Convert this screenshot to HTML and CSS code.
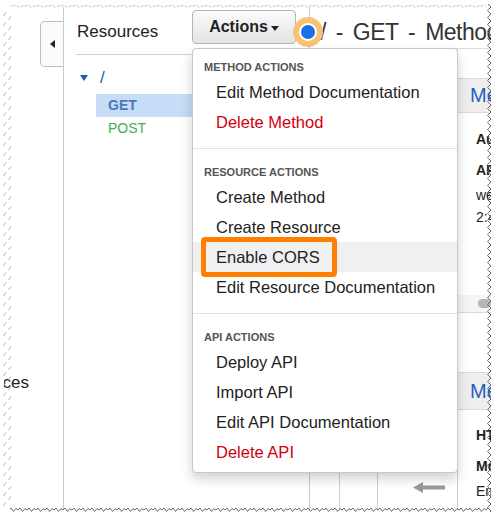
FILE: index.html
```html
<!DOCTYPE html>
<html lang="en">
<head>
<meta charset="utf-8">
<title>API Gateway - Method Execution</title>
<link rel="stylesheet" href="styles.css">
</head>
<body>
<div class="sheet">
  <aside class="rail">
    <button class="collapse" type="button"><span class="tri-left"></span></button>
    <div class="rail-label"><span>Resources</span></div>
  </aside>

  <section class="resources">
    <div class="res-head">
      <h2>Resources</h2>
      <div class="actions">
        <button class="actions-btn" type="button">Actions<span class="caret"></span></button>
        <div class="menu">
          <div class="menu-header">METHOD ACTIONS</div>
          <div class="menu-item">Edit Method Documentation</div>
          <div class="menu-item danger">Delete Method</div>
          <div class="divider"></div>
          <div class="menu-header">RESOURCE ACTIONS</div>
          <div class="menu-item">Create Method</div>
          <div class="menu-item">Create Resource</div>
          <div class="menu-item active">Enable CORS<span class="callout"></span></div>
          <div class="menu-item">Edit Resource Documentation</div>
          <div class="divider"></div>
          <div class="menu-header">API ACTIONS</div>
          <div class="menu-item">Deploy API</div>
          <div class="menu-item">Import API</div>
          <div class="menu-item">Edit API Documentation</div>
          <div class="menu-item danger">Delete API</div>
        </div>
      </div>
    </div>
    <ul class="tree">
      <li class="node"><span class="tri-down"></span><span class="path">/</span></li>
      <li class="method get">GET</li>
      <li class="method post">POST</li>
    </ul>
  </section>

  <main class="content">
    <header class="title">
      <span class="ring"><span class="dot"></span></span>
      <h1>/ - GET - Method Execution</h1>
    </header>
    <div class="body">
      <div class="diagram">
        <div class="diagram-row">
          <div class="cell c1"></div>
          <div class="cell c2"></div>
          <div class="cell c3">
            <svg class="arrow" width="32" height="11" viewBox="0 0 32 11"><path d="M0 5.5 L10 0 L10 3.5 L32 3.5 L32 7.5 L10 7.5 L10 11 Z" fill="#9a9a9a"/></svg>
          </div>
        </div>
      </div>
      <aside class="side">
        <div class="tab">Method Request</div>
        <div class="field strong">Authorization: NONE</div>
        <div class="field strong gap">API Key Required: false</div>
        <div class="field">west-</div>
        <div class="field">2:417/GET/</div>
        <div class="toggle-row"><span class="pill"></span></div>
        <div class="tab tab2">Method Response</div>
        <div class="field strong h">HTTP Status: 200</div>
        <div class="field strong gap m">Models: application/json</div>
        <div class="field">Empty</div>
      </aside>
    </div>
  </main>
</div>

<svg class="edges" width="500" height="521" viewBox="0 0 500 521" aria-hidden="true">
  <defs>
    <pattern id="pt" x="0" y="3" width="12" height="6" patternUnits="userSpaceOnUse">
      <path d="M0.5 3.5 L3.5 2 M5 2.5 L7.5 4.5 M9 3.5 L11.5 2.5" stroke="#b8b8b8" stroke-width="0.9" fill="none"/>
    </pattern>
    <pattern id="pl" x="2" y="0" width="12" height="10" patternUnits="userSpaceOnUse">
      <path d="M1.5 6 L4 2.5 M6.5 10 L9 6.5" stroke="#a8a8a8" stroke-width="0.9" fill="none"/>
    </pattern>
    <pattern id="pr" x="485" y="0" width="11" height="7" patternUnits="userSpaceOnUse">
      <path d="M6 0 L2.5 3.5 L6 7" stroke="#6a6a6a" stroke-width="1" fill="none"/>
    </pattern>
    <pattern id="pb" x="0" y="505" width="9" height="9" patternUnits="userSpaceOnUse">
      <path d="M0 5 L2 3 L4.5 6.5 L7 3.5 L9 5" stroke="#6a6a6a" stroke-width="1" fill="none"/>
    </pattern>
  </defs>
  <rect x="10" y="3" width="476" height="6" fill="url(#pt)"/>
  <rect x="2" y="10" width="12" height="496" fill="url(#pl)"/>
  <rect x="485" y="4" width="11" height="508" fill="url(#pr)"/>
  <rect x="10" y="505" width="478" height="9" fill="url(#pb)"/>
</svg>
</body>
</html>
```

FILE: styles.css
```css
* { box-sizing: border-box; }

html, body {
  margin: 0;
  padding: 0;
  background: #fff;
}

body {
  position: relative;
  width: 500px;
  height: 521px;
  overflow: hidden;
  font-family: "Liberation Sans", Arial, sans-serif;
  color: #222;
}

.sheet {
  display: flex;
  width: 491px;
  height: 503px;
  margin-top: 7px;
  overflow: hidden;
  background: #fff;
}

/* left collapsed rail */
.rail {
  flex: 0 0 64px;
  border-right: 1px solid #c9c9c9;
  display: flex;
  flex-direction: column;
  align-items: flex-end;
}

.collapse {
  margin-top: 14px;
  width: 23px;
  height: 46px;
  padding: 0;
  border: 1px solid #bdbdbd;
  border-right: 0;
  border-radius: 5px 0 0 5px;
  background: #fbfbfb;
  display: flex;
  align-items: center;
  justify-content: center;
}

.tri-left {
  width: 0;
  height: 0;
  border-top: 4px solid transparent;
  border-bottom: 4px solid transparent;
  border-right: 5px solid #222;
}

.rail-label {
  align-self: flex-start;
  margin: 306px 0 0 4px;
  width: 25px;
  display: flex;
  justify-content: flex-end;
  overflow: hidden;
  white-space: nowrap;
  font-size: 17px;
  line-height: 20px;
}

/* resources panel */
.resources {
  flex: 0 0 246px;
  border-right: 1px solid #c9c9c9;
}

.res-head {
  display: flex;
  justify-content: space-between;
  align-items: flex-start;
  height: 48px;
  margin: 0 13px 0 12px;
  border-bottom: 1px solid #d0d0d0;
}

.res-head h2 {
  margin: 15px 0 0 1px;
  font-size: 17px;
  font-weight: normal;
  line-height: 20px;
}

.actions {
  position: relative;
  margin-top: 3px;
}

.actions-btn {
  width: 104px;
  height: 34px;
  padding: 0;
  border: 1px solid #b5b5b5;
  border-radius: 4px;
  background: linear-gradient(#fbfbfb, #e4e4e4);
  font-family: inherit;
  font-size: 16px;
  font-weight: bold;
  color: #222;
  display: flex;
  align-items: center;
  justify-content: center;
}

.caret {
  display: inline-block;
  margin-left: 3px;
  margin-top: 2px;
  border-top: 5px solid #222;
  border-left: 4px solid transparent;
  border-right: 4px solid transparent;
}

.tree {
  list-style: none;
  margin: 13px 0 0;
  padding: 0;
}

.node {
  display: flex;
  align-items: center;
  height: 20px;
  padding-left: 16px;
}

.tri-down {
  width: 0;
  height: 0;
  border-left: 4.5px solid transparent;
  border-right: 4.5px solid transparent;
  border-top: 6px solid #1b5cb3;
  margin-right: 12px;
}

.path {
  font-size: 17px;
  color: #1b5cb3;
  line-height: 20px;
}

.method {
  margin: 0 13px 0 32px;
  height: 23px;
  line-height: 23px;
  padding-left: 12px;
  font-size: 14px;
}

.get {
  margin-top: 6px;
  background: #c6dcf7;
  color: #4a78b8;
  font-weight: bold;
}

.post {
  color: #45ad4a;
}

/* dropdown menu */
.menu {
  position: absolute;
  top: 38px;
  left: 0;
  z-index: 10;
  width: 266px;
  padding: 9px 0 5px;
  background: #fff;
  border: 1px solid #c8c8c8;
  border-radius: 4px;
  box-shadow: 0 6px 12px rgba(0, 0, 0, 0.18);
}

.menu-header {
  padding-left: 11px;
  font-size: 11px;
  font-weight: bold;
  line-height: 19px;
  color: #555;
}

.menu-item {
  position: relative;
  height: 30px;
  padding-left: 23px;
  font-size: 16.5px;
  line-height: 30px;
  color: #222;
  white-space: nowrap;
}

.menu-item.danger { color: #d0000f; }
.menu-item.active { background: #f0f0f0; }

.divider {
  height: 1px;
  margin: 11px 0 14px;
  background: #e3e3e3;
}

.callout {
  position: absolute;
  left: 8px;
  top: -5px;
  width: 136px;
  height: 40px;
  border: 5px solid #ff8000;
  border-radius: 4px;
}

/* main content */
.content {
  flex: 1;
  display: flex;
  flex-direction: column;
  min-width: 0;
}

.title {
  position: relative;
  height: 42px;
  border-bottom: 1px solid #dcdcdc;
}

.title h1 {
  margin: 0;
  padding: 10px 0 0 10px;
  font-size: 23px;
  font-weight: normal;
  line-height: 30px;
  letter-spacing: -0.5px;
  word-spacing: 4px;
  white-space: nowrap;
  color: #333;
}

.ring {
  position: absolute;
  left: -17px;
  top: 10px;
  width: 30px;
  height: 30px;
  border-radius: 50%;
  border: 6px solid rgba(243, 156, 18, 0.6);
  background: #fff;
  display: flex;
  align-items: center;
  justify-content: center;
}

.dot {
  width: 14px;
  height: 14px;
  border-radius: 50%;
  background: #1a6ee6;
}

.body {
  flex: 1;
  display: flex;
}

.diagram {
  flex: 0 0 147px;
  display: flex;
  flex-direction: column;
}

.diagram-row {
  margin-top: auto;
  height: 46px;
  display: flex;
}

.cell { height: 100%; }
.c1 { flex: 0 0 30px; border-right: 1px solid #cfcfcf; }
.c2 { flex: 0 0 38px; border-right: 1px solid #cfcfcf; }
.c3 { flex: 1; padding: 18px 0 0 35px; }
.arrow { display: block; }

.side {
  flex: 1;
  border-left: 1px solid #cfcfcf;
  min-width: 0;
  white-space: nowrap;
}

.tab {
  margin-top: 29px;
  height: 35px;
  padding-left: 12px;
  background: #eeeeee;
  border-top: 1px solid #dadada;
  border-bottom: 1px solid #dadada;
  font-size: 20px;
  line-height: 33px;
  color: #1f5fbf;
}

.tab2 {
  margin-top: 59px;
  height: 38px;
  line-height: 36px;
}

.field {
  padding-left: 18px;
  font-size: 14px;
  line-height: 22px;
}

.field.strong {
  font-weight: bold;
  margin-top: 15px;
}

.field.gap {
  margin-top: 9px;
  margin-bottom: 3px;
}

.field.h { margin-top: 14px; }

.toggle-row {
  margin-top: 67px;
  height: 18px;
  background: #f5f5f5;
  border-bottom: 1px solid #d8d8d8;
  display: flex;
  align-items: center;
}

.pill {
  margin-left: 20px;
  width: 16px;
  height: 9px;
  border-radius: 5px;
  background: #b5b5b5;
}

/* torn paper edges drawn over the screenshot border */
.edges {
  position: absolute;
  left: 0;
  top: 0;
  z-index: 20;
  pointer-events: none;
}
```
